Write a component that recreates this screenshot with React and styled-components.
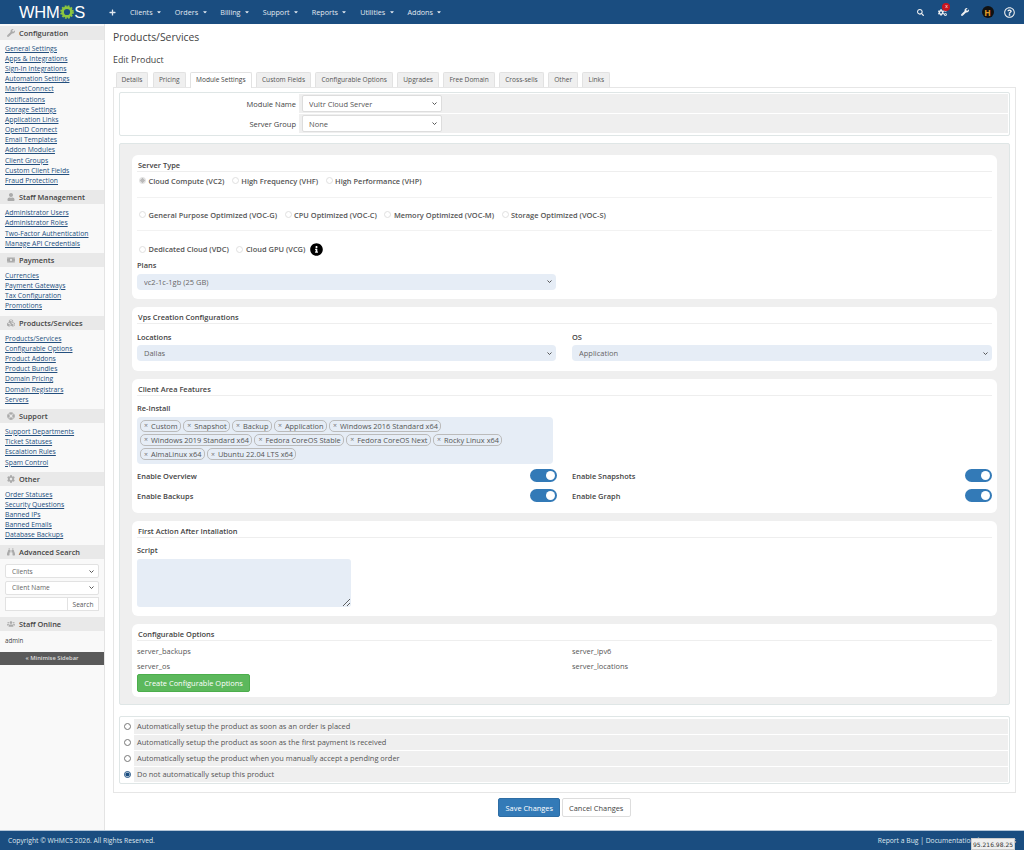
import React from 'react';
import styled, { createGlobalStyle, css } from 'styled-components';
import {
  FaSearch, FaCogs, FaWrench, FaUser, FaMoneyBill, FaCubes, FaLifeRing, FaCog, FaBinoculars, FaUsers, FaPlus, FaCaretDown, FaRegQuestionCircle, FaInfoCircle,
} from 'react-icons/fa';

const navItems = ['Clients', 'Orders', 'Billing', 'Support', 'Reports', 'Utilities', 'Addons'];

const sidebarSections = [
  { title: 'Configuration', icon: FaWrench, links: ['General Settings', 'Apps & Integrations', 'Sign-In Integrations', 'Automation Settings', 'MarketConnect', 'Notifications', 'Storage Settings', 'Application Links', 'OpenID Connect', 'Email Templates', 'Addon Modules', 'Client Groups', 'Custom Client Fields', 'Fraud Protection'] },
  { title: 'Staff Management', icon: FaUser, links: ['Administrator Users', 'Administrator Roles', 'Two-Factor Authentication', 'Manage API Credentials'] },
  { title: 'Payments', icon: FaMoneyBill, links: ['Currencies', 'Payment Gateways', 'Tax Configuration', 'Promotions'] },
  { title: 'Products/Services', icon: FaCubes, links: ['Products/Services', 'Configurable Options', 'Product Addons', 'Product Bundles', 'Domain Pricing', 'Domain Registrars', 'Servers'] },
  { title: 'Support', icon: FaLifeRing, links: ['Support Departments', 'Ticket Statuses', 'Escalation Rules', 'Spam Control'] },
  { title: 'Other', icon: FaCog, links: ['Order Statuses', 'Security Questions', 'Banned IPs', 'Banned Emails', 'Database Backups'] },
];

const tabs = ['Details', 'Pricing', 'Module Settings', 'Custom Fields', 'Configurable Options', 'Upgrades', 'Free Domain', 'Cross-sells', 'Other', 'Links'];

const serverTypes = [
  ['Cloud Compute (VC2)', 'High Frequency (VHF)', 'High Performance (VHP)'],
  ['General Purpose Optimized (VOC-G)', 'CPU Optimized (VOC-C)', 'Memory Optimized (VOC-M)', 'Storage Optimized (VOC-S)'],
  ['Dedicated Cloud (VDC)', 'Cloud GPU (VCG)'],
];

const reinstallTags = ['Custom', 'Snapshot', 'Backup', 'Application', 'Windows 2016 Standard x64', 'Windows 2019 Standard x64', 'Fedora CoreOS Stable', 'Fedora CoreOS Next', 'Rocky Linux x64', 'AlmaLinux x64', 'Ubuntu 22.04 LTS x64'];

const setupOptions = [
  'Automatically setup the product as soon as an order is placed',
  'Automatically setup the product as soon as the first payment is received',
  'Automatically setup the product when you manually accept a pending order',
  'Do not automatically setup this product',
];

const App = () => (
  <Page>
    <GlobalStyle />
    <TopBar>
      <Logo>
        WHM
        <svg width="14" height="14" viewBox="0 0 14 14">
          <circle cx="7" cy="7" r="4.4" fill="none" stroke="#8cc63f" strokeWidth="2.6" />
          <circle cx="7" cy="7" r="6" fill="none" stroke="#8cc63f" strokeWidth="1.6" strokeDasharray="1.8 1.35" />
        </svg>
        S
      </Logo>
      <PlusLink><FaPlus size={7} /></PlusLink>
      <Nav>
        {navItems.map(item => (
          <NavItem key={item}>{item}<FaCaretDown size={6} /></NavItem>
        ))}
      </Nav>
      <TopIcons>
        <IconSlot><FaSearch size={7} /></IconSlot>
        <IconSlot>
          <CogWrap>
            <FaCogs size={9} />
            <Badge>x</Badge>
          </CogWrap>
        </IconSlot>
        <IconSlot><FaWrench size={8} /></IconSlot>
        <IconSlot><Avatar>H</Avatar></IconSlot>
        <IconSlot><FaRegQuestionCircle size={11} /></IconSlot>
      </TopIcons>
    </TopBar>

    <Body>
      <Sidebar>
        {sidebarSections.map(section => (
          <SideSection key={section.title}>
            <SideHeader><section.icon size={8} />{section.title}</SideHeader>
            <SideLinks>
              {section.links.map(link => <SideLink key={link} href="#">{link}</SideLink>)}
            </SideLinks>
          </SideSection>
        ))}
        <SideHeader><FaBinoculars size={8} />Advanced Search</SideHeader>
        <SearchForm>
          <SideSelect defaultValue="Clients"><option>Clients</option></SideSelect>
          <SideSelect defaultValue="Client Name"><option>Client Name</option></SideSelect>
          <SearchRow>
            <SearchInput />
            <SearchButton>Search</SearchButton>
          </SearchRow>
        </SearchForm>
        <SideHeader><FaUsers size={8} />Staff Online</SideHeader>
        <AdminName>admin</AdminName>
        <Minimise>« Minimise Sidebar</Minimise>
      </Sidebar>

      <Main>
        <PageTitle>Products/Services</PageTitle>
        <SubTitle>Edit Product</SubTitle>
        <TabBar>
          {tabs.map(tab => <Tab key={tab} $active={tab === 'Module Settings'}>{tab}</Tab>)}
        </TabBar>
        <TabPane>
          <FormTable>
            <FormRow>
              <FormLabel>Module Name</FormLabel>
              <FormField><ModuleSelect defaultValue="Vultr Cloud Server"><option>Vultr Cloud Server</option></ModuleSelect></FormField>
            </FormRow>
            <FormRow>
              <FormLabel>Server Group</FormLabel>
              <FormField><ModuleSelect defaultValue="None"><option>None</option></ModuleSelect></FormField>
            </FormRow>
          </FormTable>

          <ModuleArea>
            <Card $height={144}>
              <CardTitle>Server Type</CardTitle>
              {serverTypes.map((group, i) => (
                <RadioGroup key={group[0]} $index={i}>
                  {group.map(type => (
                    <RadioLabel key={type}>
                      <PaleRadio type="radio" name="serverType" defaultChecked={type === 'Cloud Compute (VC2)'} />
                      {type}
                    </RadioLabel>
                  ))}
                  {i === 2 && <InfoIcon size={13} />}
                </RadioGroup>
              ))}
              <FieldLabel>Plans</FieldLabel>
              <BlueSelect $half defaultValue="plan"><option value="plan">vc2-1c-1gb (25 GB)</option></BlueSelect>
            </Card>

            <Card $height={64}>
              <CardTitle>Vps Creation Configurations</CardTitle>
              <TwoColumns>
                <div>
                  <FieldLabel>Locations</FieldLabel>
                  <BlueSelect defaultValue="Dallas"><option>Dallas</option></BlueSelect>
                </div>
                <div>
                  <FieldLabel>OS</FieldLabel>
                  <BlueSelect defaultValue="Application"><option>Application</option></BlueSelect>
                </div>
              </TwoColumns>
            </Card>

            <Card $height={134}>
              <CardTitle>Client Area Features</CardTitle>
              <FieldLabel>Re-Install</FieldLabel>
              <TagBox>
                {reinstallTags.map(tag => <Tag key={tag}><TagX>×</TagX>{tag}</Tag>)}
              </TagBox>
              <ToggleGrid>
                <ToggleRow><ToggleLabel>Enable Overview</ToggleLabel><Toggle /></ToggleRow>
                <ToggleRow><ToggleLabel>Enable Snapshots</ToggleLabel><Toggle /></ToggleRow>
                <ToggleRow><ToggleLabel>Enable Backups</ToggleLabel><Toggle /></ToggleRow>
                <ToggleRow><ToggleLabel>Enable Graph</ToggleLabel><Toggle /></ToggleRow>
              </ToggleGrid>
            </Card>

            <Card $height={95}>
              <CardTitle>First Action After Intallation</CardTitle>
              <FieldLabel>Script</FieldLabel>
              <ScriptArea />
            </Card>

            <Card $height={73}>
              <CardTitle>Configurable Options</CardTitle>
              <OptionGrid>
                <span>server_backups</span>
                <span>server_ipv6</span>
                <span>server_os</span>
                <span>server_locations</span>
              </OptionGrid>
              <GreenButton>Create Configurable Options</GreenButton>
            </Card>
          </ModuleArea>

          <SetupTable>
            {setupOptions.map((option, i) => (
              <SetupRow key={option}>
                <SetupRadioCell>
                  <SetupRadio type="radio" name="setup" defaultChecked={i === 3} />
                </SetupRadioCell>
                <SetupText>{option}</SetupText>
              </SetupRow>
            ))}
          </SetupTable>
        </TabPane>

        <Actions>
          <SaveButton>Save Changes</SaveButton>
          <CancelButton>Cancel Changes</CancelButton>
        </Actions>
      </Main>
    </Body>

    <Footer>
      <span>Copyright © WHMCS 2026. All Rights Reserved.</span>
      <FooterLinks>Report a Bug | Documentation | Contact Us</FooterLinks>
      <IpTip>95.216.98.25</IpTip>
    </Footer>
  </Page>
);

const GlobalStyle = createGlobalStyle`
  html, body {
    margin: 0;
    padding: 0;
    background: #fff;
    font-family: "Open Sans", "Liberation Sans", sans-serif;
    font-size: 8px;
    color: #333;
    overflow: hidden;
  }
  * {
    box-sizing: border-box;
  }
`;

// small chevron instead of the big native select arrow
const selectArrow = css`
  appearance: none;
  background-image: url("data:image/svg+xml,%3Csvg xmlns='http://www.w3.org/2000/svg' viewBox='0 0 10 6'%3E%3Cpath d='M1 1l4 4 4-4' fill='none' stroke='%23444' stroke-width='1.8'/%3E%3C/svg%3E");
  background-repeat: no-repeat;
  background-position: right 4px center;
  background-size: 5px 3px;
`;

const Page = styled.div`
  display: flex;
  flex-direction: column;
  height: 850px;
  position: relative;
`;

const TopBar = styled.header`
  display: flex;
  align-items: center;
  flex: 0 0 24px;
  background: #1a4d80;
  color: #e3e9f0;
`;

const Logo = styled.div`
  display: flex;
  align-items: center;
  width: 109px;
  padding-left: 19px;
  font-family: "Liberation Sans", sans-serif;
  font-size: 16.5px;
  letter-spacing: -0.3px;
  color: #fff;

  svg {
    margin: 0 0.5px;
  }
`;

const PlusLink = styled.span`
  display: flex;
  width: 21px;
`;

const Nav = styled.nav`
  display: flex;
  gap: 12.7px;
  flex: 1;
`;

const NavItem = styled.span`
  display: flex;
  align-items: center;
  gap: 3.5px;
  font-size: 7.2px;
`;

const TopIcons = styled.div`
  display: flex;
  align-items: center;
  padding-right: 3px;
  color: #f2f2f2;
`;

const IconSlot = styled.span`
  display: flex;
  align-items: center;
  justify-content: center;
  width: 22.3px;
`;

const CogWrap = styled.span`
  position: relative;
  display: flex;
`;

const Badge = styled.span`
  position: absolute;
  top: -5px;
  right: -3px;
  width: 8px;
  height: 8px;
  border-radius: 50%;
  background: #c9151e;
  color: #fff;
  font-size: 5px;
  line-height: 7px;
  text-align: center;
`;

const Avatar = styled.span`
  display: flex;
  align-items: center;
  justify-content: center;
  width: 12px;
  height: 12px;
  border-radius: 50%;
  background: #111;
  color: #e29a26;
  font-size: 8.5px;
  font-weight: 700;
`;

const Body = styled.div`
  display: flex;
  flex: 1;
  min-height: 0;
`;

const Sidebar = styled.aside`
  flex: 0 0 105px;
  min-width: 0;
  padding-top: 2px;
  background: #f9f9f9;
  border-right: 1px solid #e4e4e4;
`;

const SideSection = styled.section`
  padding-bottom: 4.4px;
`;

const SideHeader = styled.div`
  display: flex;
  align-items: center;
  gap: 4.5px;
  height: 14px;
  padding-left: 6.5px;
  background: #e9e9e9;
  color: #444;
  font-size: 7.4px;
  font-weight: 600;

  svg {
    color: #aaa;
  }
`;

const SideLinks = styled.div`
  display: flex;
  flex-direction: column;
  align-items: flex-start;
  padding: 3.7px 0 0 5px;
`;

const SideLink = styled.a`
  font-size: 6.8px;
  line-height: 10.17px;
  color: #24507f;
`;

const SearchForm = styled.div`
  display: flex;
  flex-direction: column;
  gap: 2.5px;
  padding: 5px 5px 6px;
`;

const SideSelect = styled.select`
  ${selectArrow}
  width: 100%;
  height: 14px;
  padding: 0 6px;
  border: 1px solid #e2e2e2;
  border-radius: 2px;
  background-color: #fff;
  color: #666;
  font-family: inherit;
  font-size: 6.6px;
`;

const SearchRow = styled.div`
  display: flex;
  height: 14px;
`;

const SearchInput = styled.input`
  flex: 1;
  width: 0;
  min-width: 0;
  border: 1px solid #e2e2e2;
  border-right: 0;
  background: #fff;
`;

const SearchButton = styled.button`
  width: 32px;
  padding: 0;
  border: 1px solid #e2e2e2;
  background: #fff;
  color: #555;
  font-family: inherit;
  font-size: 6.6px;
`;

const AdminName = styled.div`
  padding: 5px 5px 6px;
  font-size: 6.2px;
  line-height: 10px;
  color: #444;
`;

const Minimise = styled.div`
  height: 13px;
  background: #5a5a5a;
  color: #ddd;
  font-size: 5.8px;
  font-weight: 600;
  line-height: 13px;
  text-align: center;
`;

const Main = styled.main`
  flex: 1;
  min-width: 0;
  padding: 6px 8px 0;
`;

const PageTitle = styled.h1`
  margin: 0;
  font-size: 10.4px;
  font-weight: 400;
  line-height: 15px;
  color: #444;
`;

const SubTitle = styled.h2`
  margin: 8px 0 0;
  font-size: 8.9px;
  font-weight: 400;
  line-height: 14px;
  color: #444;
`;

const TabBar = styled.div`
  display: flex;
  gap: 4.4px;
  margin-top: 5px;
  padding-left: 2.5px;
`;

const Tab = styled.div`
  position: relative;
  height: ${({ $active }) => ($active ? '16px' : '15px')};
  margin-bottom: ${({ $active }) => ($active ? '-1px' : '0')};
  padding: 0 5px;
  border: 1px solid #e2e2e2;
  border-bottom: 0;
  border-radius: 2px 2px 0 0;
  background: ${({ $active }) => ($active ? '#fff' : '#efefef')};
  color: ${({ $active }) => ($active ? '#444' : '#555')};
  font-size: 6.6px;
  line-height: 14px;
`;

const TabPane = styled.div`
  height: 706px;
  padding: 4px 5px 0;
  border: 1px solid #e6e6e6;
`;

const FormTable = styled.div`
  display: flex;
  flex-direction: column;
  height: 44px;
  padding: 1px;
  border: 1px solid #dfe6e6;
  border-radius: 2px;
`;

const FormRow = styled.div`
  display: flex;
  flex: 0 0 20px;
`;

const FormLabel = styled.div`
  flex: 0 0 178px;
  padding-right: 3px;
  font-size: 7.5px;
  line-height: 20px;
  text-align: right;
  color: #444;
`;

const FormField = styled.div`
  flex: 1;
  display: flex;
  align-items: center;
  padding-left: 3px;
  background: #efefef;
  border-bottom: 1px solid #fff;
`;

const ModuleSelect = styled.select`
  ${selectArrow}
  width: 140px;
  height: 17px;
  padding: 0 6px;
  border: 1px solid #ddd;
  border-radius: 2px;
  background-color: #fff;
  color: #555;
  font-family: inherit;
  font-size: 7.5px;
`;

const ModuleArea = styled.div`
  display: flex;
  flex-direction: column;
  gap: 8px;
  height: 562px;
  margin-top: 7px;
  padding: 11px 12px 0;
  border: 1px solid #dfe6e6;
  border-radius: 2px;
  background: #efefef;
`;

const Card = styled.section`
  flex: 0 0 ${({ $height }) => $height}px;
  padding: 6px 5px 0;
  border-radius: 6px;
  background: #fff;
`;

const CardTitle = styled.div`
  height: 11px;
  margin-bottom: 5px;
  padding-left: 1px;
  font-size: 7.45px;
  font-weight: 600;
  line-height: 9px;
  color: #444;
  border-bottom: 1px solid #eee;
`;

const radioGroupLayouts = [
  css`
    height: 21px;
    padding: 0 0 13px 2px;
    border-bottom: 1px solid #f2f2f2;
  `,
  css`
    height: 33px;
    padding: 1px 0 0 2px;
    border-bottom: 1px solid #f2f2f2;
  `,
  css`
    height: 27px;
    padding: 9px 0 0 2px;
  `,
];

const RadioGroup = styled.div`
  display: flex;
  align-items: center;
  gap: 7.5px;
  ${({ $index }) => radioGroupLayouts[$index]}
`;

const RadioLabel = styled.label`
  display: flex;
  align-items: center;
  gap: 2.5px;
  font-size: 7.45px;
  font-weight: 600;
  color: #555;
  white-space: nowrap;
`;

const PaleRadio = styled.input`
  appearance: none;
  width: 7px;
  height: 7px;
  margin: 0;
  border: 1px solid #e0e0e0;
  border-radius: 50%;
  background: #fff;

  &:checked {
    border-color: #ddd;
    background: radial-gradient(circle, #bbb 0 2px, #f4f4f4 2.4px);
  }
`;

const InfoIcon = styled(FaInfoCircle)`
  margin-left: -3px;
  color: #000;
`;

const FieldLabel = styled.div`
  height: 12px;
  margin-bottom: 3.5px;
  padding-top: 3px;
  font-size: 7.45px;
  font-weight: 600;
  line-height: 9px;
  color: #444;
`;

const BlueSelect = styled.select`
  ${selectArrow}
  display: block;
  width: ${({ $half }) => ($half ? '419px' : '100%')};
  height: 16px;
  padding: 0 7px;
  border: 0;
  border-radius: 4px;
  background-color: #e6edf6;
  color: #666;
  font-family: inherit;
  font-size: 7.5px;
`;

const TwoColumns = styled.div`
  display: grid;
  grid-template-columns: 419px 420px;
  column-gap: 16px;
  padding-top: 0.5px;
`;

const TagBox = styled.div`
  display: flex;
  flex-wrap: wrap;
  align-content: flex-start;
  gap: 2.4px 2px;
  width: 416px;
  height: 47px;
  padding: 3px;
  border-radius: 4px;
  background: #e6edf6;
`;

const Tag = styled.span`
  display: flex;
  align-items: center;
  height: 12px;
  padding: 0 2.5px 0 3px;
  border: 1px solid #bbb;
  border-radius: 5px;
  color: #555;
  font-size: 7.4px;
  white-space: nowrap;
`;

const TagX = styled.span`
  margin-right: 3px;
  color: #777;
  font-size: 7px;
`;

const ToggleGrid = styled.div`
  display: grid;
  grid-template-columns: 420px 420px;
  column-gap: 15px;
  row-gap: 6px;
  margin-top: 5px;
`;

const ToggleRow = styled.div`
  display: flex;
  align-items: center;
  justify-content: space-between;
  height: 14px;
`;

const ToggleLabel = styled.span`
  font-size: 7.45px;
  font-weight: 600;
  color: #444;
`;

const Toggle = styled.span`
  position: relative;
  width: 27px;
  height: 13px;
  border-radius: 7px;
  background: #337ab7;

  &::after {
    content: '';
    position: absolute;
    top: 2px;
    right: 2px;
    width: 9px;
    height: 9px;
    border-radius: 50%;
    background: #fff;
  }
`;

const ScriptArea = styled.textarea`
  display: block;
  width: 214px;
  height: 48px;
  border: 0;
  border-radius: 3px;
  background: #e6edf6;
`;

const OptionGrid = styled.div`
  display: grid;
  grid-template-columns: 435px 1fr;
  margin-top: -2.5px;
  font-size: 7.45px;
  line-height: 15px;
  color: #555;
`;

const GreenButton = styled.button`
  display: block;
  width: 113px;
  height: 18px;
  margin-top: 0.5px;
  padding: 0;
  border: 1px solid #4cae4c;
  border-radius: 2px;
  background: #5cb85c;
  color: #fff;
  font-family: inherit;
  font-size: 7.45px;
  white-space: nowrap;
`;

const SetupTable = styled.div`
  display: flex;
  flex-direction: column;
  height: 68px;
  margin-top: 11px;
  padding: 2px 1px 1px;
  border: 1px solid #dfe6e6;
  border-radius: 2px;
`;

const SetupRow = styled.div`
  display: flex;
  height: 15px;
  margin-bottom: 1px;
`;

const SetupRadioCell = styled.div`
  display: flex;
  align-items: center;
  justify-content: center;
  flex: 0 0 13px;
`;

const SetupRadio = styled.input`
  width: 7px;
  height: 7px;
  margin: 0;
  accent-color: #1a4d80;
`;

const SetupText = styled.div`
  flex: 1;
  padding-left: 3px;
  background: #efefef;
  font-size: 7.45px;
  line-height: 15px;
  color: #555;
`;

const Actions = styled.div`
  display: flex;
  justify-content: center;
  gap: 1.5px;
  margin-top: 5px;
`;

const SaveButton = styled.button`
  width: 62px;
  height: 19px;
  padding: 0;
  border: 1px solid #2e6da4;
  border-radius: 2px;
  background: #337ab7;
  color: #fff;
  font-family: inherit;
  font-size: 7.4px;
`;

const CancelButton = styled.button`
  width: 69px;
  height: 19px;
  padding: 0;
  border: 1px solid #ddd;
  border-radius: 2px;
  background: #fff;
  color: #444;
  font-family: inherit;
  font-size: 7.4px;
`;

const Footer = styled.footer`
  position: relative;
  display: flex;
  align-items: center;
  justify-content: space-between;
  flex: 0 0 20px;
  padding: 0 8px;
  border-top: 1px solid #b4c6d8;
  background: #1a4d80;
  color: #dfe7ef;
  font-size: 6.75px;
`;

const FooterLinks = styled.span`
  white-space: nowrap;
`;

const IpTip = styled.span`
  position: absolute;
  right: 9px;
  bottom: 0;
  width: 44px;
  height: 12px;
  border: 1px solid #ccc;
  background: #eee;
  color: #333;
  font-family: "DejaVu Sans", sans-serif;
  font-size: 6px;
  line-height: 11px;
  text-align: center;
`;

export default App;
